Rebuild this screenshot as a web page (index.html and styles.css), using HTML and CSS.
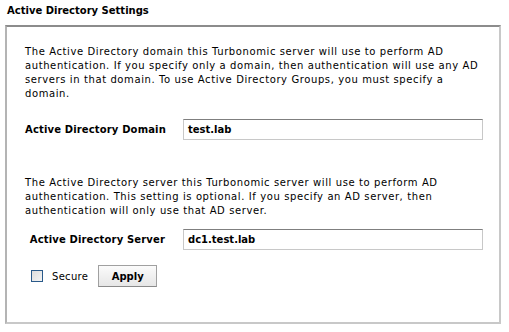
FILE: index.html
```html
<!DOCTYPE html>
<html>
<head>
<meta charset="utf-8">
<link rel="stylesheet" href="styles.css">
</head>
<body>
<div class="page">
  <h1 class="title">Active Directory Settings</h1>
  <div class="panel">
    <p class="desc">The Active Directory domain this Turbonomic server will use to perform AD<br>authentication. If you specify only a domain, then authentication will use any AD<br>servers in that domain. To use Active Directory Groups, you must specify a<br>domain.</p>
    <div class="field field-domain">
      <label class="label">Active Directory Domain</label>
      <div class="input">test.lab</div>
    </div>
    <p class="desc desc-server">The Active Directory server this Turbonomic server will use to perform AD<br>authentication. This setting is optional. If you specify an AD server, then<br>authentication will only use that AD server.</p>
    <div class="field field-server">
      <label class="label">Active Directory Server</label>
      <div class="input">dc1.test.lab</div>
    </div>
    <div class="actions">
      <span class="checkbox"></span>
      <span class="secure">Secure</span>
      <button class="btn">Apply</button>
    </div>
  </div>
</div>
</body>
</html>
```

FILE: styles.css
```css
html, body {
  margin: 0;
  padding: 0;
  background: #ffffff;
}
body {
  font-family: "DejaVu Sans", Verdana, sans-serif;
  font-size: 10px;
  color: #000;
}
.page {
  padding: 4px 0 0 5px;
  width: 496px;
}
.title {
  margin: 0 0 0 2px;
  font-size: 10px;
  font-weight: bold;
  line-height: 14px;
  height: 14px;
}
.panel {
  box-sizing: border-box;
  margin-top: 7px;
  height: 299px;
  border-style: solid;
  border-width: 2px;
  border-top-color: #8c8c8c;
  border-left-color: #b4b4b4;
  border-right-color: #c8c8c8;
  border-bottom-color: #c8c8c8;
  padding: 18px 6px 0 18px;
  display: flex;
  flex-direction: column;
}
.desc {
  margin: 0;
  line-height: 14px;
  letter-spacing: 0.6px;
  white-space: nowrap;
}
.desc-server {
  margin-top: 36px;
}
.field {
  display: grid;
  grid-template-columns: 140px 300px;
  column-gap: 18px;
  align-items: center;
  margin-top: 18px;
}
.field-server {
  margin-top: 11px;
}
.label {
  font-weight: bold;
  text-align: right;
  white-space: nowrap;
  letter-spacing: 0.15px;
}
.input {
  height: 21px;
  box-sizing: border-box;
  border: 1px solid #c8c8c8;
  border-top-color: #7f7f7f;
  padding-left: 4px;
  line-height: 19px;
  font-weight: bold;
}
.actions {
  display: flex;
  align-items: center;
  margin-top: 15px;
  padding-left: 6px;
}
.checkbox {
  width: 12px;
  height: 12px;
  box-sizing: border-box;
  border: 1px solid #2a5a8a;
  background: linear-gradient(135deg, #dcdcdc, #f4f4f4);
}
.secure {
  margin-left: 9px;
  letter-spacing: 0.3px;
}
.btn {
  margin-left: 10px;
  width: 59px;
  height: 22px;
  font-family: "DejaVu Sans", Verdana, sans-serif;
  font-size: 10px;
  font-weight: bold;
  color: #000;
  background: linear-gradient(#fbfbfb, #e6e6e6);
  border: 1px solid #a0a0a0;
  border-bottom-color: #8a8a8a;
  padding: 0;
}
```
